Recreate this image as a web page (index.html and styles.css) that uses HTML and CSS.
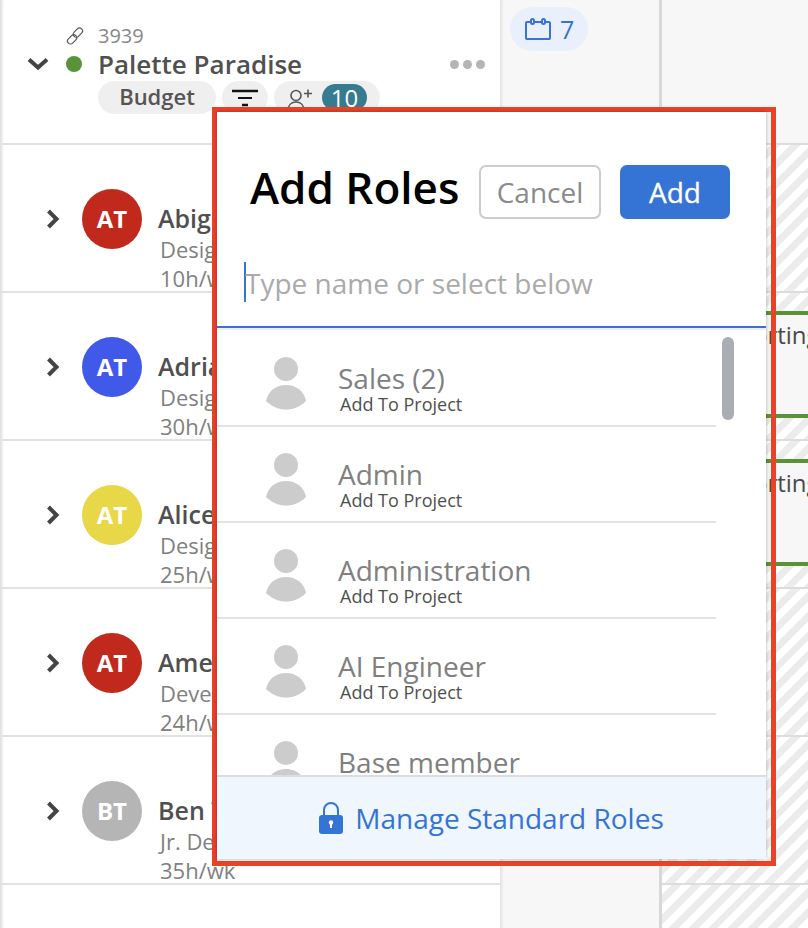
FILE: index.html
```html
<!DOCTYPE html>
<html lang="en">
<head>
<meta charset="utf-8">
<title>Add Roles</title>
<link rel="stylesheet" href="styles.css">
</head>
<body>
<div class="board">
  <section class="people">
    <header class="project">
      <div class="project-id">
        <svg class="link-icon" viewBox="0 0 18 18" width="18" height="18" fill="none" stroke="#555" stroke-width="1.200"><rect x="6.700" y="2.800" width="10.500" height="6" rx="3" transform="rotate(-45 11.700 5.800)"/><rect x="0.800" y="9.200" width="10.500" height="6" rx="3" transform="rotate(-45 6.300 12.200)"/></svg>
        <span>3939</span>
      </div>
      <div class="project-name">
        <svg class="chev-down" viewBox="0 0 22 14" width="22" height="14" fill="none" stroke="#444" stroke-width="4"><path d="M2 2.5l9 8 9-8"/></svg>
        <span class="status-dot"></span>
        <span class="title">Palette Paradise</span>
        <span class="dots"><i></i><i></i><i></i></span>
      </div>
      <div class="pills">
        <span class="pill budget">Budget</span>
        <span class="pill filter">
          <svg viewBox="0 0 26 18" width="26" height="18" fill="none" stroke="#111"><path stroke-width="2.500" d="M0 2h26"/><path stroke-width="2" d="M6 9h14"/><path stroke-width="2.500" d="M10 16h6"/></svg>
        </span>
        <span class="pill members">
          <svg viewBox="0 0 28 24" width="28" height="24" fill="none" stroke="#555" stroke-width="1.6"><circle cx="9" cy="9.500" r="5"/><path d="M1 25c0-6 3.500-9 8-9s8 3 8 9M17 7.500h8M21 3.500v8"/></svg>
          <span class="count">10</span>
        </span>
      </div>
    </header>

    <div class="person">
      <svg class="chev" viewBox="0 0 14 20" width="14" height="20" fill="none" stroke="#444" stroke-width="4"><path d="M2.500 2l8 8-8 8"/></svg>
      <span class="avatar red">AT</span>
      <div class="info"><div class="name">Abigail Tran</div><div class="meta">Designer</div><div class="meta">10h/wk</div></div>
    </div>
    <div class="person">
      <svg class="chev" viewBox="0 0 14 20" width="14" height="20" fill="none" stroke="#444" stroke-width="4"><path d="M2.500 2l8 8-8 8"/></svg>
      <span class="avatar blue">AT</span>
      <div class="info"><div class="name">Adrian Tran</div><div class="meta">Designer</div><div class="meta">30h/wk</div></div>
    </div>
    <div class="person">
      <svg class="chev" viewBox="0 0 14 20" width="14" height="20" fill="none" stroke="#444" stroke-width="4"><path d="M2.500 2l8 8-8 8"/></svg>
      <span class="avatar yellow">AT</span>
      <div class="info"><div class="name">Alice Tran</div><div class="meta">Designer</div><div class="meta">25h/wk</div></div>
    </div>
    <div class="person">
      <svg class="chev" viewBox="0 0 14 20" width="14" height="20" fill="none" stroke="#444" stroke-width="4"><path d="M2.500 2l8 8-8 8"/></svg>
      <span class="avatar red">AT</span>
      <div class="info"><div class="name">Amelia Tran</div><div class="meta">Developer</div><div class="meta">24h/wk</div></div>
    </div>
    <div class="person">
      <svg class="chev" viewBox="0 0 14 20" width="14" height="20" fill="none" stroke="#444" stroke-width="4"><path d="M2.500 2l8 8-8 8"/></svg>
      <span class="avatar grey">BT</span>
      <div class="info"><div class="name">Ben Thomas</div><div class="meta">Jr. Designer</div><div class="meta">35h/wk</div></div>
    </div>
  </section>

  <section class="week">
    <span class="chip">
      <svg viewBox="0 0 26 22" width="26" height="22" fill="none" stroke="#3573d5" stroke-width="2"><path d="M5 4H2a1 1 0 0 0-1 1v15a1 1 0 0 0 1 1h22a1 1 0 0 0 1-1V5a1 1 0 0 0-1-1h-3M9 4h8"/><rect x="6" y="1" width="3" height="5" rx="1.500"/><rect x="17" y="1" width="3" height="5" rx="1.500"/></svg>
      <span>7</span>
    </span>
  </section>

  <section class="timeline">
    <div class="tl-head"></div>
    <div class="tl-row"></div>
    <div class="tl-row"><div class="booking">Reporting</div></div>
    <div class="tl-row"><div class="booking">Reporting</div></div>
    <div class="tl-row"></div>
    <div class="tl-row"></div>
    <div class="tl-end"></div>
  </section>
</div>

<div class="outline">
  <div class="modal">
    <div class="modal-head">
      <h1>Add Roles</h1>
      <button class="btn cancel">Cancel</button>
      <button class="btn add">Add</button>
    </div>
    <div class="search"><span class="caret"></span><span class="placeholder">Type name or select below</span></div>
    <div class="list">
      <span class="thumb"></span>
      <div class="role"><svg class="role-icon" viewBox="0 0 42 54" width="42" height="54" fill="#ccc"><circle cx="21" cy="12" r="12"/><path d="M1 44C3 34 11 28 21 28S39 34 41 44C35 50 28 52.500 21 52.500S7 50 1 44z"/></svg><div class="role-text"><div class="role-name">Sales (2)</div><div class="role-sub">Add To Project</div></div></div>
      <div class="role"><svg class="role-icon" viewBox="0 0 42 54" width="42" height="54" fill="#ccc"><circle cx="21" cy="12" r="12"/><path d="M1 44C3 34 11 28 21 28S39 34 41 44C35 50 28 52.500 21 52.500S7 50 1 44z"/></svg><div class="role-text"><div class="role-name">Admin</div><div class="role-sub">Add To Project</div></div></div>
      <div class="role"><svg class="role-icon" viewBox="0 0 42 54" width="42" height="54" fill="#ccc"><circle cx="21" cy="12" r="12"/><path d="M1 44C3 34 11 28 21 28S39 34 41 44C35 50 28 52.500 21 52.500S7 50 1 44z"/></svg><div class="role-text"><div class="role-name">Administration</div><div class="role-sub">Add To Project</div></div></div>
      <div class="role"><svg class="role-icon" viewBox="0 0 42 54" width="42" height="54" fill="#ccc"><circle cx="21" cy="12" r="12"/><path d="M1 44C3 34 11 28 21 28S39 34 41 44C35 50 28 52.500 21 52.500S7 50 1 44z"/></svg><div class="role-text"><div class="role-name">AI Engineer</div><div class="role-sub">Add To Project</div></div></div>
      <div class="role"><svg class="role-icon" viewBox="0 0 42 54" width="42" height="54" fill="#ccc"><circle cx="21" cy="12" r="12"/><path d="M1 44C3 34 11 28 21 28S39 34 41 44C35 50 28 52.500 21 52.500S7 50 1 44z"/></svg><div class="role-text"><div class="role-name">Base member</div><div class="role-sub">Add To Project</div></div></div>
    </div>
    <div class="manage">
      <svg viewBox="0 0 26 34" width="26" height="34"><path d="M6 15V9a7 7 0 0 1 14 0v6" fill="none" stroke="#3573d5" stroke-width="2"/><rect x="1" y="14" width="24" height="19" rx="3" fill="#3573d5"/><circle cx="13" cy="21.500" r="2.200" fill="#fff"/><rect x="12" y="21.500" width="2" height="5.500" fill="#fff"/></svg>
      <span>Manage Standard Roles</span>
    </div>
  </div>
</div>
</body>
</html>
```
FILE: styles.css
```css
* { box-sizing: border-box; }
html, body { margin: 0; padding: 0; }
body {
  width: 808px;
  height: 928px;
  overflow: hidden;
  position: relative;
  background: #fff;
  font-family: "Open Sans", sans-serif;
}
.board { display: flex; width: 808px; height: 928px; overflow: hidden; }

/* left column */
.people {
  width: 500px;
  flex: none;
  background: #fff;
  box-shadow: inset 4px 0 3px -2px #ddd;
}
.project { height: 145px; border-bottom: 2px solid #e2e2e2; padding-top: 24px; }
.project-id {
  display: flex; align-items: center; gap: 14px;
  height: 24px; padding-left: 66px;
  font-size: 20px; line-height: 24px; color: #888;
}
.project-name {
  display: flex; align-items: center;
  height: 34px; margin-top: -1px; padding-left: 27px; padding-right: 15px;
}
.status-dot { width: 16px; height: 16px; border-radius: 50%; background: #5a9236; margin-left: 17px; }
.title { font-size: 26px; font-weight: 600; color: #505050; margin-left: 16px; line-height: 34px; }
.dots { margin-left: auto; display: flex; gap: 4px; }
.dots i { display: block; width: 9px; height: 9px; border-radius: 50%; background: #b5b5b5; }
.pills { display: flex; gap: 6px; padding-left: 98px; }
.pill { display: flex; align-items: center; height: 33px; border-radius: 17px; background: #efefef; }
.budget { width: 118px; justify-content: center; padding-bottom: 3px; font-size: 22px; font-weight: 600; color: #555; }
.filter { width: 46px; justify-content: center; }
.members { width: 106px; padding-left: 13px; gap: 7px; }
.count {
  width: 45px; height: 27px; border-radius: 14px; background: #367b8f; color: #fff;
  font-size: 24px; line-height: 27px; text-align: center;
}
.person {
  height: 148px;
  border-bottom: 2px solid #e2e2e2;
  display: flex; align-items: flex-start;
  padding: 44px 0 0 46px;
}
.chev { margin-top: 20px; }
.avatar {
  width: 60px; height: 60px; border-radius: 50%; flex: none;
  margin-left: 22px;
  color: #fff; font-size: 24px; font-weight: 700; line-height: 60px; text-align: center;
}
.red { background: #c1291c; }
.blue { background: #4159e8; }
.yellow { background: #e8d848; }
.grey { background: #b5b5b5; }
.info { margin-left: 16px; padding-top: 12px; }
.name { font-size: 25px; font-weight: 600; color: #505050; line-height: 34px; }
.meta { font-size: 22px; color: #808080; line-height: 29px; margin-left: 2px; }

/* middle column */
.week {
  width: 162px; flex: none;
  background: #f7f7f7;
  border-right: 3px solid #d8d8d8;
  box-shadow: inset 4px 0 3px -2px #e2e2e2;
  padding: 7px 0 0 10px;
}
.chip {
  display: inline-flex; align-items: center; gap: 9px;
  width: 78px; height: 44px; padding-left: 15px;
  border-radius: 22px; background: #e9f0fb;
  color: #3573d5; font-size: 25px;
}

/* right column */
.timeline { flex: 1; }
.tl-head { height: 145px; background: #f7f7f7; border-bottom: 2px solid #dcdcdc; }
.tl-row, .tl-end {
  background: repeating-linear-gradient(135deg, #fff 0 7px, #ececec 7px 14px);
}
.tl-row {
  height: 148px;
  border-bottom: 2px solid #dcdcdc;
  padding-top: 18px;
}
.tl-end { height: 44px; }
.booking {
  height: 107px;
  background: #f7f7f7;
  border-top: 4px solid #5a9236;
  border-bottom: 4px solid #5a9236;
  padding: 3px 0 0 48px;
  font-size: 24px; line-height: 34px; color: #4a4a4a;
  white-space: nowrap;
}

/* overlay */
.outline {
  position: absolute; left: 212px; top: 107px;
  width: 564px; height: 759px;
  border: 5px solid #e94327;
}
.modal {
  width: 549px; height: 747px;
  background: #fff;
  box-shadow: 0 0 4px rgba(0,0,0,.3);
  display: flex; flex-direction: column;
}
.modal-head { display: flex; align-items: flex-start; height: 150px; padding: 53px 0 0 33px; }
h1 { width: 229px; flex: none; margin: -10px 0 0; font-size: 44px; font-weight: 600; line-height: 64px; color: #000; white-space: nowrap; }
.btn { height: 54px; font-family: inherit; font-size: 28px; border-radius: 7px; }
.cancel { width: 122px; background: #fff; border: 2px solid #ccc; color: #8a8a8a; }
.add { width: 110px; margin-left: 19px; background: #3573d5; border: 0; color: #fff; -webkit-text-stroke: .3px #fff; }
.search {
  height: 66px;
  border-bottom: 2px solid #3573d5;
  box-shadow: 0 2px 0 #eee;
  display: flex; align-items: flex-start;
  padding: 0 0 0 27px;
  font-size: 28px; line-height: 42px; color: #aaa;
}
.caret { width: 2px; height: 40px; background: #3573d5; margin-right: -1px; }
.list { flex: 1; min-height: 0; overflow: hidden; position: relative; padding-top: 3px; }
.thumb {
  position: absolute; left: 505px; top: 9px;
  width: 12px; height: 83px; border-radius: 6px; background: #a9adb5;
}
.role {
  height: 96px; width: 499px;
  border-bottom: 2px solid #e2e2e2;
  display: flex; align-items: flex-start;
  padding: 26px 0 0 48px;
}
.role-icon { flex: none; }
.role-text { margin-left: 31px; margin-top: 2px; }
.role-name { font-size: 28px; line-height: 38px; color: #808080; }
.role-sub { font-size: 18px; line-height: 15px; color: #4f4f4f; margin: 0 0 0 2px; }
.manage {
  height: 84px; flex: none;
  border-top: 2px solid #ddd;
  background: #eff6fe;
  display: flex; align-items: center; justify-content: center; gap: 11px;
  color: #3573d5; font-size: 28px;
  padding-right: 1px;
}
```
